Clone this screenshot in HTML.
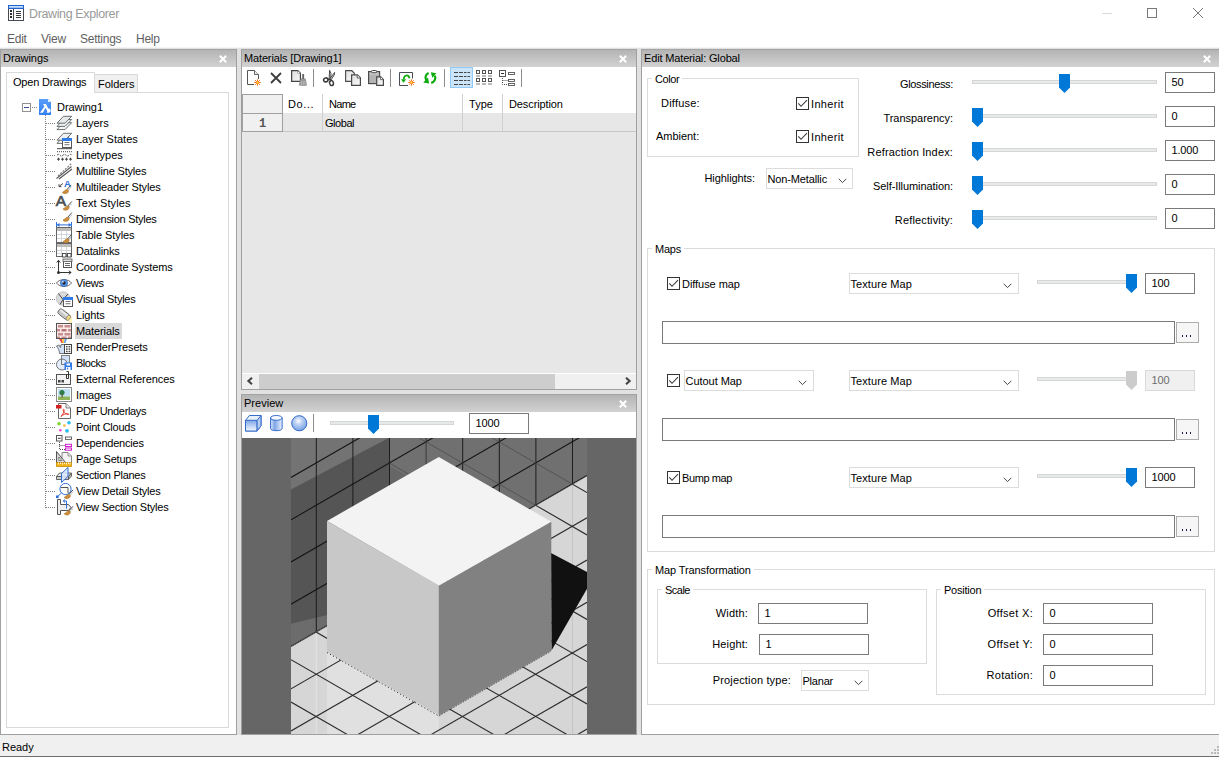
<!DOCTYPE html>
<html><head><meta charset="utf-8"><title>Drawing Explorer</title>
<style>
*{box-sizing:border-box;margin:0;padding:0}
html,body{width:1219px;height:757px;overflow:hidden;background:#fff}
body{position:relative;font-family:"Liberation Sans",sans-serif;font-size:11px;color:#000;letter-spacing:-0.15px}
.a{position:absolute}
.t{position:absolute;white-space:pre;line-height:14px;height:14px}
.hdr{position:absolute;height:18px;background:linear-gradient(#b4b4b4,#d2d2d2);border-top:1px solid #a3a3a3}
.panel{position:absolute;background:#fff;border:1px solid #a0a0a0}
.cx{position:absolute;width:8px;height:8px}
.edit{position:absolute;background:#fff;border:1px solid #7a7a7a;height:21px;line-height:19px;padding-left:5.5px;white-space:pre}
.combo{position:absolute;background:#fff;border:1px solid #dcdcdc;height:21px;line-height:21px;padding-left:0.5px;white-space:pre}
.grp{position:absolute;border:1px solid #dcdcdc}
.grp>span{position:absolute;top:-7px;left:4px;background:#fff;padding:0 3px;line-height:14px;white-space:pre}
.trk{position:absolute;height:4px;background:#e7eaea;border:1px solid #d6d6d6}
.cb{position:absolute;width:13px;height:13px;border:1px solid #333;background:#fff}
.menu{position:absolute;top:31px;font-size:12px;color:#5f5f5f;letter-spacing:-0.25px;line-height:16px;white-space:pre}
</style></head><body>
<svg class="a" style="left:8px;top:5px" width="16" height="16" viewBox="0 0 16 16">
<rect x="0.5" y="3.5" width="15" height="12" fill="#fff" stroke="#454b50"/>
<rect x="0" y="0" width="16" height="4" fill="#2563cc"/><rect x="1" y="1" width="14" height="2" fill="#9cc2f5"/><rect x="1" y="1" width="14" height="1" fill="#c4dbfa"/>
<rect x="5" y="4" width="1" height="11" fill="#454b50"/>
<rect x="2" y="5" width="2" height="2" fill="#2c2c2c"/><rect x="2" y="8" width="2" height="2" fill="#2c2c2c"/><rect x="2" y="11" width="2" height="2" fill="#2c2c2c"/>
<rect x="8" y="6" width="5" height="1" fill="#3a3a3a"/><rect x="8" y="8" width="5" height="1" fill="#3a3a3a"/><rect x="8" y="10" width="5" height="1" fill="#3a3a3a"/><rect x="8" y="12" width="5" height="1" fill="#3a3a3a"/>
</svg>
<div class="t" style="left:29px;top:6px;font-size:12.5px;line-height:17px;height:17px;color:#9a9a9a;letter-spacing:-0.37px">Drawing Explorer</div>
<div class="a" style="left:1102px;top:13px;width:10px;height:1px;background:#d9d9d9"></div>
<div class="a" style="left:1147px;top:8px;width:10px;height:10px;border:1px solid #787878"></div>
<svg class="a" style="left:1192px;top:7px" width="12" height="12" viewBox="0 0 12 12"><path d="M1 1L11 11M11 1L1 11" stroke="#787878" stroke-width="1" fill="none"/></svg>
<div class="menu" style="left:7px">Edit</div><div class="menu" style="left:41px">View</div><div class="menu" style="left:80px">Settings</div><div class="menu" style="left:136px">Help</div><div class="a" style="left:0;top:47px;width:1219px;height:688px;background:#e1e1e1"></div><div class="a" style="left:0;top:47px;width:1219px;height:1px;background:#f4f4f4"></div><div class="a" style="left:0;top:735px;width:1219px;height:22px;background:#f0f0f0"></div><div class="a" style="left:0;top:756px;width:1219px;height:1px;background:#6e6e6e"></div><div class="t" style="left:2px;top:740px;letter-spacing:-0.024px">Ready</div><svg class="a" style="left:1207px;top:744px" width="12" height="10" viewBox="0 0 12 10"><g fill="#b9b9b9"><rect x="10" y="2" width="2" height="2"/><rect x="7" y="5" width="2" height="2"/><rect x="10" y="5" width="2" height="2"/><rect x="4" y="8" width="2" height="2"/><rect x="7" y="8" width="2" height="2"/><rect x="10" y="8" width="2" height="2"/></g></svg><div class="panel" style="left:0px;top:49px;width:237px;height:686px"></div><div class="hdr" style="left:1px;top:49px;width:235px"></div><div class="t" style="left:3px;top:51px;letter-spacing:-0.051px">Drawings</div><svg class="cx" style="left:219px;top:55px" viewBox="0 0 8 8"><path d="M0.8 0.8L7.2 7.2M7.2 0.8L0.8 7.2" stroke="#fff" stroke-width="2" fill="none"/></svg><div class="a" style="left:6px;top:92px;width:223px;height:636px;border:1px solid #d9d9d9;background:#fff"></div><div class="a" style="left:94px;top:74px;width:44px;height:19px;border:1px solid #d9d9d9;background:#f0f0f0"></div><div class="a" style="left:6px;top:72px;width:89px;height:21px;border:1px solid #d9d9d9;border-bottom:none;background:#fff"></div><div class="t" style="left:13px;top:75px;letter-spacing:-0.186px">Open Drawings</div><div class="t" style="left:98px;top:77px;letter-spacing:-0.031px">Folders</div><div class="a" style="left:22px;top:103px;width:9px;height:9px;border:1px solid #919191;background:#fff"></div><div class="a" style="left:24px;top:107px;width:5px;height:1px;background:#3b4f91"></div><div class="a" style="left:32px;top:107px;width:6px;height:1px;background-image:linear-gradient(90deg,#808080 50%,transparent 50%);background-size:2px 1px"></div><svg class="a" style="left:39px;top:99px" width="12" height="16" viewBox="0 0 12 16"><defs><linearGradient id="gd" x1="0" y1="0" x2="0" y2="1"><stop offset="0" stop-color="#5b9cf8"/><stop offset="1" stop-color="#2f80f5"/></linearGradient></defs><path d="M0 0H9L12 3V16H0Z" fill="url(#gd)"/><path d="M9 0V3H12Z" fill="#e6effc"/><path d="M4.1 4.9H7L9.2 9.6C10.6 9.2 11.8 10.1 11.6 11.7C11.5 12.9 10.8 13.7 9.8 13.7H7.6L8.3 12.2L6.6 8.7L3.9 13.7H1L5.4 7.4Z" fill="#fff"/></svg><div class="t" style="left:57px;top:100px;letter-spacing:-0.067px">Drawing1</div><div class="a" style="left:45px;top:115px;width:1px;height:393px;background-image:linear-gradient(#808080 50%,transparent 50%);background-size:1px 2px"></div><div class="a" style="left:46px;top:123px;width:10px;height:1px;background-image:linear-gradient(90deg,#808080 50%,transparent 50%);background-size:2px 1px"></div><svg class="a" style="left:56px;top:115px;overflow:visible" width="16" height="16" viewBox="0 0 16 16"><g stroke="#5c6262" stroke-width="0.9"><path d="M7.4 7.7H15.7L9 14.6H1Z" fill="#f4f6f6"/><path d="M7.4 4.5H15.7L9 11.4H1Z" fill="#eef1f1"/><path d="M7.4 1.3H15.7L9 8.2H1Z" fill="#e6eaea"/></g></svg><div class="t" style="left:76px;top:116px;letter-spacing:-0.066px">Layers</div><div class="a" style="left:46px;top:139px;width:10px;height:1px;background-image:linear-gradient(90deg,#808080 50%,transparent 50%);background-size:2px 1px"></div><svg class="a" style="left:56px;top:131px;overflow:visible" width="16" height="16" viewBox="0 0 16 16"><g stroke="#5c6262" stroke-width="0.9"><path d="M7.4 5.5H13L9 12.4H1Z" fill="#f4f6f6"/><path d="M7.4 2.3H15.7L9 9.2H1Z" fill="#eef1f1"/></g><rect x="6.5" y="7.5" width="9" height="9" fill="#fff" stroke="#555" stroke-width="1"/><rect x="6.0" y="7.0" width="10" height="3" fill="#2f7be8"/><rect x="8.5" y="11.1" width="5" height="0.9" fill="#666"/><rect x="8.5" y="13.3" width="5" height="0.9" fill="#666"/></svg><div class="t" style="left:76px;top:132px;letter-spacing:0.003px">Layer States</div><div class="a" style="left:46px;top:155px;width:10px;height:1px;background-image:linear-gradient(90deg,#808080 50%,transparent 50%);background-size:2px 1px"></div><svg class="a" style="left:56px;top:147px;overflow:visible" width="16" height="16" viewBox="0 0 16 16"><g stroke="#444" fill="none" transform="translate(0,1.2)"><path d="M1 0.5H16" stroke-width="1"/><path d="M1 3.5H16" stroke-width="1" stroke-dasharray="1 1"/><path d="M1 7C2 5.8 3 5.8 4 7S6 8.2 7 7S9 5.8 10 7S12 8.2 13 7S15 5.8 16 7" stroke-width="0.9" stroke-dasharray="2 1"/><path d="M1 11H16" stroke-width="1" stroke-dasharray="3 1"/><path d="M2.5 9.5V12.5M6.5 9.5V12.5M10.5 9.5V12.5M14.5 9.5V12.5" stroke-width="1"/></g></svg><div class="t" style="left:76px;top:148px;letter-spacing:-0.049px">Linetypes</div><div class="a" style="left:46px;top:171px;width:10px;height:1px;background-image:linear-gradient(90deg,#808080 50%,transparent 50%);background-size:2px 1px"></div><svg class="a" style="left:56px;top:163px;overflow:visible" width="16" height="16" viewBox="0 0 16 16"><g stroke="#555" fill="none" stroke-width="1.1"><path d="M0.5 15.5L15.5 3.5"/><path d="M2 13L15.5 0.5" stroke-dasharray="2 1.2" stroke="#777"/><path d="M3 16L16 6"/></g></svg><div class="t" style="left:76px;top:164px;letter-spacing:-0.191px">Multiline Styles</div><div class="a" style="left:46px;top:187px;width:10px;height:1px;background-image:linear-gradient(90deg,#808080 50%,transparent 50%);background-size:2px 1px"></div><svg class="a" style="left:56px;top:179px;overflow:visible" width="16" height="16" viewBox="0 0 16 16"><text x="8" y="8" font-family="Liberation Sans" font-weight="bold" font-size="9.5" fill="#2f6fd6">A</text><path d="M7 4.5L3.5 7" stroke="#333" stroke-width="0.9" fill="none"/><path d="M3 5.2V7.6H5.4" stroke="#333" stroke-width="0.9" fill="none"/><g transform="translate(6.2,10.2) scale(1.0)"><path d="M4.9 0.3L9 -4.3" stroke="#4a4f55" stroke-width="1" fill="none"/><path d="M6 1.2L9.4 -2.6" stroke="#8a8f95" stroke-width="0.8" stroke-dasharray="1.6 0.8" fill="none"/><path d="M0.1 3.2C1 2.6 2.4 1.4 3.6 0.6C4.6 0 5.8 0.2 6.3 1.2C6.6 2.4 5.8 3.8 4.2 4.3C2.6 4.7 0.8 4.2 0.1 3.2Z" fill="#cb8c3c" stroke="#a56f24" stroke-width="0.5"/></g></svg><div class="t" style="left:76px;top:180px;letter-spacing:-0.119px">Multileader Styles</div><div class="a" style="left:46px;top:203px;width:10px;height:1px;background-image:linear-gradient(90deg,#808080 50%,transparent 50%);background-size:2px 1px"></div><svg class="a" style="left:56px;top:195px;overflow:visible" width="16" height="16" viewBox="0 0 16 16"><text x="-0.3" y="11.4" font-family="Liberation Sans" font-size="15.5" fill="#4a5055" stroke="#4a5055" stroke-width="0.7">A</text><g transform="translate(6.8,10.8) scale(1.0)"><path d="M4.9 0.3L9 -4.3" stroke="#4a4f55" stroke-width="1" fill="none"/><path d="M6 1.2L9.4 -2.6" stroke="#8a8f95" stroke-width="0.8" stroke-dasharray="1.6 0.8" fill="none"/><path d="M0.1 3.2C1 2.6 2.4 1.4 3.6 0.6C4.6 0 5.8 0.2 6.3 1.2C6.6 2.4 5.8 3.8 4.2 4.3C2.6 4.7 0.8 4.2 0.1 3.2Z" fill="#cb8c3c" stroke="#a56f24" stroke-width="0.5"/></g></svg><div class="t" style="left:76px;top:196px;letter-spacing:0.141px">Text Styles</div><div class="a" style="left:46px;top:219px;width:10px;height:1px;background-image:linear-gradient(90deg,#808080 50%,transparent 50%);background-size:2px 1px"></div><svg class="a" style="left:56px;top:211px;overflow:visible" width="16" height="16" viewBox="0 0 16 16"><g transform="translate(6.8,6.0) scale(1.0)"><path d="M4.9 0.3L9 -4.3" stroke="#4a4f55" stroke-width="1" fill="none"/><path d="M6 1.2L9.4 -2.6" stroke="#8a8f95" stroke-width="0.8" stroke-dasharray="1.6 0.8" fill="none"/><path d="M0.1 3.2C1 2.6 2.4 1.4 3.6 0.6C4.6 0 5.8 0.2 6.3 1.2C6.6 2.4 5.8 3.8 4.2 4.3C2.6 4.7 0.8 4.2 0.1 3.2Z" fill="#cb8c3c" stroke="#a56f24" stroke-width="0.5"/></g><g stroke="#2f6fd6" fill="none" stroke-width="1"><path d="M0.5 11V16M15.5 11V16"/><path d="M1 13.9H15"/></g><path d="M3.4 11.8L1 13.9L3.4 16ZM12.6 11.8L15 13.9L12.6 16Z" fill="#2f6fd6"/></svg><div class="t" style="left:76px;top:212px;letter-spacing:-0.279px">Dimension Styles</div><div class="a" style="left:46px;top:235px;width:10px;height:1px;background-image:linear-gradient(90deg,#808080 50%,transparent 50%);background-size:2px 1px"></div><svg class="a" style="left:56px;top:227px;overflow:visible" width="16" height="16" viewBox="0 0 16 16"><rect x="0.5" y="0.5" width="15" height="15" fill="#fff" stroke="#666"/><rect x="1" y="1" width="14" height="3" fill="#bdbdbd"/><path d="M1 7.5H15M1 11.5H15M5.5 4V15M10.5 4V15" stroke="#cfd6dc" stroke-width="1" fill="none"/><g transform="translate(6.8,11.5) scale(1.0)"><path d="M4.9 0.3L9 -4.3" stroke="#4a4f55" stroke-width="1" fill="none"/><path d="M6 1.2L9.4 -2.6" stroke="#8a8f95" stroke-width="0.8" stroke-dasharray="1.6 0.8" fill="none"/><path d="M0.1 3.2C1 2.6 2.4 1.4 3.6 0.6C4.6 0 5.8 0.2 6.3 1.2C6.6 2.4 5.8 3.8 4.2 4.3C2.6 4.7 0.8 4.2 0.1 3.2Z" fill="#cb8c3c" stroke="#a56f24" stroke-width="0.5"/></g></svg><div class="t" style="left:76px;top:228px;letter-spacing:-0.065px">Table Styles</div><div class="a" style="left:46px;top:251px;width:10px;height:1px;background-image:linear-gradient(90deg,#808080 50%,transparent 50%);background-size:2px 1px"></div><svg class="a" style="left:56px;top:243px;overflow:visible" width="16" height="16" viewBox="0 0 16 16"><rect x="0.5" y="0.5" width="15" height="13" fill="#fff" stroke="#666"/><rect x="1" y="1" width="14" height="3" fill="#bdbdbd"/><path d="M1 7.5H15M1 10.5H15M5.5 4V13M10.5 4V13" stroke="#cfd6dc" stroke-width="1" fill="none"/><g fill="#fff" stroke="#444" stroke-width="0.9"><rect x="6.5" y="10.5" width="3.5" height="3.5"/><rect x="11.5" y="10.5" width="3.5" height="3.5"/><path d="M10 12.2H11.5" /></g></svg><div class="t" style="left:76px;top:244px;letter-spacing:-0.181px">Datalinks</div><div class="a" style="left:46px;top:267px;width:10px;height:1px;background-image:linear-gradient(90deg,#808080 50%,transparent 50%);background-size:2px 1px"></div><svg class="a" style="left:56px;top:259px;overflow:visible" width="16" height="16" viewBox="0 0 16 16"><g stroke="#333" fill="none" stroke-width="1"><path d="M2.5 13.5V1.5"/><path d="M0.8 3.6L2.5 1.2L4.2 3.6"/><path d="M2.5 13.5H15"/><path d="M12.8 11.8L15.2 13.5L12.8 15.2"/></g><circle cx="2.5" cy="13.5" r="1.5" fill="#333"/><rect x="7.5" y="0.5" width="8" height="8" fill="#fff" stroke="#555"/><rect x="7" y="0" width="9" height="2.5" fill="#ddd" stroke="#555" stroke-width="0.8"/><path d="M9 4.5H14M9 6.5H14" stroke="#666" stroke-width="1"/></svg><div class="t" style="left:76px;top:260px;letter-spacing:-0.138px">Coordinate Systems</div><div class="a" style="left:46px;top:283px;width:10px;height:1px;background-image:linear-gradient(90deg,#808080 50%,transparent 50%);background-size:2px 1px"></div><svg class="a" style="left:56px;top:275px;overflow:visible" width="16" height="16" viewBox="0 0 16 16"><path d="M0.5 8C3.5 3.5 12.5 3.5 15.5 8C12.5 12.5 3.5 12.5 0.5 8Z" fill="#fff" stroke="#666" stroke-width="1"/><circle cx="8" cy="8" r="3.6" fill="#5b9bea" stroke="#2f5fb0" stroke-width="0.7"/><circle cx="8" cy="8" r="1.7" fill="#223"/><circle cx="6.9" cy="6.9" r="0.8" fill="#fff"/></svg><div class="t" style="left:76px;top:276px;letter-spacing:-0.289px">Views</div><div class="a" style="left:46px;top:299px;width:10px;height:1px;background-image:linear-gradient(90deg,#808080 50%,transparent 50%);background-size:2px 1px"></div><svg class="a" style="left:56px;top:291px;overflow:visible" width="16" height="16" viewBox="0 0 16 16"><circle cx="7" cy="7.5" r="6.8" fill="#d9d9d9" stroke="#b0b0b0" stroke-width="0.6"/><path d="M2.5 2.5L7 8.5L12 3" stroke="#444" stroke-width="1" fill="none"/><path d="M7 8.5L4 13.5" stroke="#444" stroke-width="1" fill="none"/><rect x="7.5" y="6.5" width="9" height="9" fill="#fff" stroke="#555" stroke-width="1"/><rect x="7.0" y="6.0" width="10" height="3" fill="#2f7be8"/><rect x="9.5" y="10.1" width="5" height="0.9" fill="#666"/><rect x="9.5" y="12.3" width="5" height="0.9" fill="#666"/></svg><div class="t" style="left:76px;top:292px;letter-spacing:-0.257px">Visual Styles</div><div class="a" style="left:46px;top:315px;width:10px;height:1px;background-image:linear-gradient(90deg,#808080 50%,transparent 50%);background-size:2px 1px"></div><svg class="a" style="left:56px;top:307px;overflow:visible" width="16" height="16" viewBox="0 0 16 16"><path d="M11 10L16 10L16 16L13 16Z" fill="#fdeeb0" opacity="0.85"/><g transform="rotate(38 8 8)"><rect x="1" y="4.5" width="13" height="6" rx="2.5" fill="#c8c8c8" stroke="#666" stroke-width="0.9"/><ellipse cx="13.2" cy="7.5" rx="1.7" ry="3" fill="#f6dc7a" stroke="#777" stroke-width="0.7"/><rect x="2" y="5.5" width="9" height="1.6" fill="#ededed"/></g></svg><div class="t" style="left:76px;top:308px;letter-spacing:-0.132px">Lights</div><div class="a" style="left:46px;top:331px;width:10px;height:1px;background-image:linear-gradient(90deg,#808080 50%,transparent 50%);background-size:2px 1px"></div><div class="a" style="left:75px;top:323px;width:47px;height:16px;background:#d9d9d9"></div><svg class="a" style="left:56px;top:323px;overflow:visible" width="16" height="16" viewBox="0 0 16 16"><rect x="0.5" y="0.5" width="15" height="15" fill="#fbeaea" stroke="#555"/><g fill="#c98f8f"><rect x="2" y="2" width="5" height="2.5"/><rect x="8.5" y="2" width="6" height="2.5"/><rect x="1" y="6" width="3" height="2.5"/><rect x="5.5" y="6" width="5" height="2.5" fill="#b57878"/><rect x="12" y="6" width="3" height="2.5"/><rect x="2" y="10" width="5" height="2.5"/><rect x="8.5" y="10" width="6" height="2.5"/><rect x="1" y="13.5" width="3" height="1.5"/><rect x="5.5" y="13.5" width="5" height="1.5"/><rect x="12" y="13.5" width="3" height="1.5"/></g></svg><div class="t" style="left:76px;top:324px;letter-spacing:-0.103px">Materials</div><div class="a" style="left:46px;top:347px;width:10px;height:1px;background-image:linear-gradient(90deg,#808080 50%,transparent 50%);background-size:2px 1px"></div><svg class="a" style="left:56px;top:339px;overflow:visible" width="16" height="16" viewBox="0 0 16 16"><path d="M3 0L6 0L7 4L5.5 4Z" fill="#f04848"/><path d="M6 0L8.5 0L8 4L7 4Z" fill="#f7d038"/><path d="M8.5 0L11 0L9.5 4L8 4Z" fill="#6aa0f0"/><path d="M0.5 7L3 6L4.5 8.5L5 5.5H10V14.5H3.5C3.5 11 2 9.5 0.5 7Z" fill="#cfe0f7" stroke="#666" stroke-width="0.9"/><rect x="8.5" y="5.5" width="7" height="9" fill="#fff" stroke="#444" stroke-width="1"/><g fill="#444"><rect x="10" y="7" width="1.6" height="1.4"/><rect x="12.6" y="7" width="1.6" height="1.4"/><rect x="10" y="9.4" width="1.6" height="1.4"/><rect x="12.6" y="9.4" width="1.6" height="1.4"/><rect x="10" y="11.8" width="1.6" height="1.4"/><rect x="12.6" y="11.8" width="1.6" height="1.4"/></g></svg><div class="t" style="left:76px;top:340px;letter-spacing:-0.131px">RenderPresets</div><div class="a" style="left:46px;top:363px;width:10px;height:1px;background-image:linear-gradient(90deg,#808080 50%,transparent 50%);background-size:2px 1px"></div><svg class="a" style="left:56px;top:355px;overflow:visible" width="16" height="16" viewBox="0 0 16 16"><rect x="5.5" y="0.5" width="8" height="9" fill="#cfe0f7" stroke="#777" stroke-width="0.9"/><circle cx="6" cy="9.5" r="5.5" fill="#e2ecfa" stroke="#666" stroke-width="0.9"/><path d="M5.5 4V9.5H11" fill="none" stroke="#666" stroke-width="0.9"/><rect x="8.5" y="7.5" width="7.5" height="7.5" fill="#2f7be8"/><rect x="10.5" y="8.5" width="3.5" height="2" fill="#fff"/><rect x="10" y="12" width="4.5" height="3" fill="#fff"/><rect x="11" y="12.6" width="1.2" height="1.8" fill="#2f7be8"/></svg><div class="t" style="left:76px;top:356px;letter-spacing:-0.481px">Blocks</div><div class="a" style="left:46px;top:379px;width:10px;height:1px;background-image:linear-gradient(90deg,#808080 50%,transparent 50%);background-size:2px 1px"></div><svg class="a" style="left:56px;top:371px;overflow:visible" width="16" height="16" viewBox="0 0 16 16"><rect x="0.5" y="3.5" width="14" height="10" fill="#f2f2f2" stroke="#555" stroke-width="1"/><rect x="2" y="9" width="2.5" height="2.5" fill="#444"/><rect x="5.5" y="9" width="2.5" height="2.5" fill="#444"/><path d="M10.5 0.5H12.5V7.5H10.5V3" fill="none" stroke="#333" stroke-width="1"/></svg><div class="t" style="left:76px;top:372px;letter-spacing:-0.048px">External References</div><div class="a" style="left:46px;top:395px;width:10px;height:1px;background-image:linear-gradient(90deg,#808080 50%,transparent 50%);background-size:2px 1px"></div><svg class="a" style="left:56px;top:387px;overflow:visible" width="16" height="16" viewBox="0 0 16 16"><rect x="0.5" y="0.5" width="15" height="14" fill="#fff" stroke="#888" stroke-width="1"/><rect x="2" y="2" width="12" height="7.5" fill="#bfe0f5"/><rect x="2" y="9.5" width="12" height="3.5" fill="#8fb35a"/><circle cx="6" cy="5.5" r="2.6" fill="#2e7d46"/><rect x="5.5" y="7.5" width="1.2" height="3" fill="#6b4a2a"/></svg><div class="t" style="left:76px;top:388px;letter-spacing:-0.136px">Images</div><div class="a" style="left:46px;top:411px;width:10px;height:1px;background-image:linear-gradient(90deg,#808080 50%,transparent 50%);background-size:2px 1px"></div><svg class="a" style="left:56px;top:403px;overflow:visible" width="16" height="16" viewBox="0 0 16 16"><path d="M2.5 0.5H10L14.5 5V15.5H2.5Z" fill="#fff" stroke="#666" stroke-width="1"/><path d="M10 0.5V5H14.5" fill="#e8e8e8" stroke="#666" stroke-width="0.8"/><rect x="0" y="2" width="5.5" height="3.5" fill="#d42020"/><path d="M5 13.5C7 11 8.5 8.5 8 6.5C7.5 5.6 6.8 6.6 7.4 8C8.4 10 10.5 11.6 12.6 11.4C13.2 10.6 11 10.4 9 11C7.4 11.5 6 12.4 5 13.5Z" fill="none" stroke="#e03a2a" stroke-width="1"/></svg><div class="t" style="left:76px;top:404px;letter-spacing:-0.340px">PDF Underlays</div><div class="a" style="left:46px;top:427px;width:10px;height:1px;background-image:linear-gradient(90deg,#808080 50%,transparent 50%);background-size:2px 1px"></div><svg class="a" style="left:56px;top:419px;overflow:visible" width="16" height="16" viewBox="0 0 16 16"><circle cx="3" cy="4.7" r="1.8" fill="#7fd630"/><circle cx="13" cy="3.8" r="1.8" fill="#28c0f0"/><circle cx="8.4" cy="6.5" r="1.3" fill="#f0b830"/><circle cx="4.3" cy="11.2" r="1.3" fill="#f040d0"/><circle cx="11" cy="11.8" r="1.9" fill="#28c0f0"/></svg><div class="t" style="left:76px;top:420px;letter-spacing:-0.243px">Point Clouds</div><div class="a" style="left:46px;top:443px;width:10px;height:1px;background-image:linear-gradient(90deg,#808080 50%,transparent 50%);background-size:2px 1px"></div><svg class="a" style="left:56px;top:435px;overflow:visible" width="16" height="16" viewBox="0 0 16 16"><rect x="0.5" y="0.5" width="5.5" height="5.5" fill="#fff" stroke="#555" stroke-width="1"/><rect x="2" y="2.8" width="2.6" height="1" fill="#333"/><rect x="9.5" y="2" width="6" height="2.4" fill="#fff" stroke="#555" stroke-width="0.9"/><path d="M3.5 7V14.5H9M3.5 10.5H9" fill="none" stroke="#555" stroke-width="1" stroke-dasharray="1 1"/><rect x="9.5" y="9.3" width="6" height="2.2" fill="#fff" stroke="#d020d0" stroke-width="1"/><rect x="9.5" y="13" width="6" height="2.2" fill="#fff" stroke="#d020d0" stroke-width="1"/></svg><div class="t" style="left:76px;top:436px;letter-spacing:-0.222px">Dependencies</div><div class="a" style="left:46px;top:459px;width:10px;height:1px;background-image:linear-gradient(90deg,#808080 50%,transparent 50%);background-size:2px 1px"></div><svg class="a" style="left:56px;top:451px;overflow:visible" width="16" height="16" viewBox="0 0 16 16"><path d="M6 1.5H12L15.5 5V12H6Z" fill="#f4f4f4" stroke="#777" stroke-width="0.9"/><path d="M12 1.5V5H15.5" fill="#ddd" stroke="#777" stroke-width="0.7"/><path d="M0.5 0.5V11.5H9.5Z" fill="#d9d9d9" stroke="#555" stroke-width="1"/><path d="M2.8 6V9.5H5.8Z" fill="#fff" stroke="#555" stroke-width="0.7"/><rect x="0.5" y="11.5" width="15" height="4" fill="#f2b418" stroke="#c48a00" stroke-width="0.8"/><path d="M2.5 11.5V13.5M4.5 11.5V13M6.5 11.5V13.5M8.5 11.5V13M10.5 11.5V13.5M12.5 11.5V13M14 11.5V13.5" stroke="#fff" stroke-width="0.8"/></svg><div class="t" style="left:76px;top:452px;letter-spacing:-0.230px">Page Setups</div><div class="a" style="left:46px;top:475px;width:10px;height:1px;background-image:linear-gradient(90deg,#808080 50%,transparent 50%);background-size:2px 1px"></div><svg class="a" style="left:56px;top:467px;overflow:visible" width="16" height="16" viewBox="0 0 16 16"><path d="M0.5 9.5L3.5 6H15.5L12.5 9.5Z" fill="#e6e6e6" stroke="#555" stroke-width="0.9"/><path d="M0.5 9.5H12.5V12.5H0.5Z" fill="#d0d0d0" stroke="#555" stroke-width="0.9"/><path d="M12.5 9.5L15.5 6V9L12.5 12.5Z" fill="#bbb" stroke="#555" stroke-width="0.9"/><path d="M5.5 6.5L12 0.5V9.5L5.5 15.5Z" fill="#dbe8fb" fill-opacity="0.85" stroke="#2f6fd6" stroke-width="1"/></svg><div class="t" style="left:76px;top:468px;letter-spacing:-0.284px">Section Planes</div><div class="a" style="left:46px;top:491px;width:10px;height:1px;background-image:linear-gradient(90deg,#808080 50%,transparent 50%);background-size:2px 1px"></div><svg class="a" style="left:56px;top:483px;overflow:visible" width="16" height="16" viewBox="0 0 16 16"><circle cx="9.5" cy="6" r="5.6" fill="#fff" stroke="#2f6fd6" stroke-width="1"/><path d="M5 4.5H12V10" fill="none" stroke="#555" stroke-width="1"/><path d="M5.5 10L1.5 13.5" stroke="#2f6fd6" stroke-width="1"/><rect x="0" y="12.5" width="2.6" height="2.6" fill="#2f6fd6"/><g transform="translate(8,11.2) scale(1.0)"><path d="M4.9 0.3L9 -4.3" stroke="#4a4f55" stroke-width="1" fill="none"/><path d="M6 1.2L9.4 -2.6" stroke="#8a8f95" stroke-width="0.8" stroke-dasharray="1.6 0.8" fill="none"/><path d="M0.1 3.2C1 2.6 2.4 1.4 3.6 0.6C4.6 0 5.8 0.2 6.3 1.2C6.6 2.4 5.8 3.8 4.2 4.3C2.6 4.7 0.8 4.2 0.1 3.2Z" fill="#cb8c3c" stroke="#a56f24" stroke-width="0.5"/></g></svg><div class="t" style="left:76px;top:484px;letter-spacing:-0.179px">View Detail Styles</div><div class="a" style="left:46px;top:507px;width:10px;height:1px;background-image:linear-gradient(90deg,#808080 50%,transparent 50%);background-size:2px 1px"></div><svg class="a" style="left:56px;top:499px;overflow:visible" width="16" height="16" viewBox="0 0 16 16"><path d="M1.5 0.5H4.5V5.5H12.5L15 8.5L12.5 11.5H4.5V15.5H1.5Z" fill="#efefef" stroke="#555" stroke-width="1"/><path d="M10.5 9.5V2H7.5" fill="none" stroke="#2f6fd6" stroke-width="1"/><path d="M9 0.6L7.2 2L9 3.4" fill="none" stroke="#2f6fd6" stroke-width="1"/><g transform="translate(8,11.6) scale(1.0)"><path d="M4.9 0.3L9 -4.3" stroke="#4a4f55" stroke-width="1" fill="none"/><path d="M6 1.2L9.4 -2.6" stroke="#8a8f95" stroke-width="0.8" stroke-dasharray="1.6 0.8" fill="none"/><path d="M0.1 3.2C1 2.6 2.4 1.4 3.6 0.6C4.6 0 5.8 0.2 6.3 1.2C6.6 2.4 5.8 3.8 4.2 4.3C2.6 4.7 0.8 4.2 0.1 3.2Z" fill="#cb8c3c" stroke="#a56f24" stroke-width="0.5"/></g></svg><div class="t" style="left:76px;top:500px;letter-spacing:-0.206px">View Section Styles</div><div class="panel" style="left:241px;top:49px;width:396px;height:341px"></div><div class="hdr" style="left:242px;top:49px;width:394px"></div><div class="t" style="left:244px;top:51px;letter-spacing:-0.146px">Materials [Drawing1]</div><svg class="cx" style="left:619px;top:55px" viewBox="0 0 8 8"><path d="M0.8 0.8L7.2 7.2M7.2 0.8L0.8 7.2" stroke="#fff" stroke-width="2" fill="none"/></svg><svg class="a" style="left:246px;top:70px;overflow:visible" width="16" height="16" viewBox="0 0 16 16"><path d="M1.5 0.5H8.5L12.5 4.5V14.5H1.5Z" fill="#fff" stroke="#555" stroke-width="1"/><path d="M8.5 0.5V4.5H12.5" fill="#eee" stroke="#555" stroke-width="0.9"/><rect x="8" y="9" width="8" height="7" fill="#fff"/><g transform="translate(11.5,12.5)"><path d="M0 -3.2V3.2M-3.2 0H3.2M-2.3 -2.3L2.3 2.3M2.3 -2.3L-2.3 2.3" stroke="#f26a1b" stroke-width="1" fill="none"/><circle r="1.2" fill="#ffd23a"/></g></svg><svg class="a" style="left:270px;top:72px;overflow:visible" width="12" height="12" viewBox="0 0 12 12"><path d="M1 1L11 11M11 1L1 11" stroke="#3c3c3c" stroke-width="1.8" fill="none"/></svg><svg class="a" style="left:291px;top:70px;overflow:visible" width="16" height="16" viewBox="0 0 16 16"><defs><linearGradient id="gp" x1="0" y1="0" x2="1" y2="1"><stop offset="0" stop-color="#dcdcdc"/><stop offset="1" stop-color="#fafafa"/></linearGradient></defs><path d="M0.6 0.6H6.8L9.4 3.2V11.4H0.6Z" fill="url(#gp)" stroke="#444" stroke-width="1.2"/><path d="M6.6 0.8V3.4H9.2" fill="#fff" stroke="#888" stroke-width="0.6"/><rect x="11.2" y="4" width="1.9" height="5" fill="#666"/><rect x="9.6" y="8.6" width="5.2" height="1.2" fill="#777"/><path d="M9.4 9.8H15L16 15.4C13 16.2 10.5 16.2 7.6 15.2Z" fill="#9a9a9a"/><path d="M10.6 11V15M12.3 11V15.3M14 11V15" stroke="#c8c8c8" stroke-width="0.6"/></svg><div class="a" style="left:313px;top:69px;width:1px;height:18px;background:#8c8c8c"></div><svg class="a" style="left:323px;top:70px;overflow:visible" width="12" height="16" viewBox="0 0 12 16"><path d="M6.6 0.3L8 3.6L7.5 9.6L6.1 9.2Z" fill="#ddd" stroke="#3a3a3a" stroke-width="0.9"/><path d="M11.6 2.4L11.2 5L7.8 10.2L6.6 9.2Z" fill="#ddd" stroke="#3a3a3a" stroke-width="0.9"/><ellipse cx="2.8" cy="9.9" rx="2.2" ry="1.9" transform="rotate(-20 2.8 9.9)" fill="none" stroke="#3a3a3a" stroke-width="1.5"/><ellipse cx="8.5" cy="13" rx="1.9" ry="2.6" transform="rotate(-12 8.5 13)" fill="none" stroke="#3a3a3a" stroke-width="1.5"/><path d="M4.6 9.2L7 9.4L7.9 10.6" fill="none" stroke="#3a3a3a" stroke-width="1.4"/></svg><svg class="a" style="left:345px;top:70px;overflow:visible" width="16" height="16" viewBox="0 0 16 16"><defs><linearGradient id="gcp" x1="0" y1="0" x2="1" y2="1"><stop offset="0" stop-color="#dedede"/><stop offset="1" stop-color="#fbfbfb"/></linearGradient></defs><path d="M0.6 0.6H6.8L9.4 3.2V11.4H0.6Z" fill="url(#gcp)" stroke="#4a4a4a" stroke-width="1.1"/><path d="M6.6 0.8L9.2 3.4" fill="none" stroke="#4a4a4a" stroke-width="0.9"/><path d="M6.6 4.8H12.4L15.4 7.8V15.4H6.6Z" fill="url(#gcp)" stroke="#4a4a4a" stroke-width="1.2"/><path d="M12.2 5V8H15.2" fill="#fff" stroke="#4a4a4a" stroke-width="0.9"/></svg><svg class="a" style="left:368px;top:70px;overflow:visible" width="16" height="16" viewBox="0 0 16 16"><rect x="0.6" y="1.6" width="11" height="12" fill="#b4b4b4" stroke="#4a4a4a" stroke-width="1.2"/><rect x="1.6" y="2.6" width="9" height="2" fill="#c8c8c8"/><rect x="3.4" y="0.5" width="5.4" height="2.2" rx="1" fill="#f4f4f4" stroke="#4a4a4a" stroke-width="1"/><path d="M8.7 6.8H12.8L15.4 9.4V15.4H8.7Z" fill="url(#gcp)" stroke="#4a4a4a" stroke-width="1.2"/><path d="M12.6 7V9.6H15.2" fill="#fff" stroke="#4a4a4a" stroke-width="0.8"/></svg><div class="a" style="left:390px;top:69px;width:1px;height:18px;background:#8c8c8c"></div><svg class="a" style="left:399px;top:72px;overflow:visible" width="16" height="14" viewBox="0 0 16 14"><path d="M13.5 6.5V0.5H0.5V13.5H9" fill="none" stroke="#474d54" stroke-width="1"/><path d="M10.4 6.4C10 2.4 5 2.4 4.8 7" fill="none" stroke="#0cab0c" stroke-width="1.7"/><path d="M2 7.2H7.2L4.5 10.8Z" fill="#0cab0c"/><g transform="translate(12.4,10.5)"><path d="M0 -3.2V3.2M-3.2 0H3.2M-2.3 -2.3L2.3 2.3M2.3 -2.3L-2.3 2.3" stroke="#f26a1b" stroke-width="1" fill="none"/><circle r="1.2" fill="#ffd23a"/></g></svg><svg class="a" style="left:423px;top:72px;overflow:visible" width="14" height="12" viewBox="0 0 14 12"><path d="M5.6 1C2.6 2.2 1.8 5.4 3.2 8.2" fill="none" stroke="#0cab0c" stroke-width="2.2"/><path d="M0.2 10.6L6.1 11.4L5 5.6Z" fill="#0cab0c"/><path d="M11.8 3.6C13.2 6.6 11.6 10 8.2 10.9" fill="none" stroke="#0cab0c" stroke-width="2.2"/><path d="M7.8 0.3L13.4 1.3L9.4 5.8Z" fill="#0cab0c"/></svg><div class="a" style="left:444px;top:69px;width:1px;height:18px;background:#8c8c8c"></div><div class="a" style="left:450px;top:67px;width:23px;height:21px;background:#cce4f7;border:1px solid #91c9f7"></div><svg class="a" style="left:454px;top:71px;overflow:visible" width="16" height="14" viewBox="0 0 16 14"><rect x="0" y="1" width="4" height="1" fill="#444"/><rect x="5" y="1" width="4" height="1" fill="#444"/><rect x="10" y="1" width="2.5" height="1" fill="#444"/><rect x="13.5" y="1" width="2.5" height="1" fill="#444"/><rect x="0" y="5" width="4" height="1" fill="#444"/><rect x="5" y="5" width="4" height="1" fill="#444"/><rect x="10" y="5" width="2.5" height="1" fill="#444"/><rect x="13.5" y="5" width="2.5" height="1" fill="#444"/><rect x="0" y="9" width="4" height="1" fill="#444"/><rect x="5" y="9" width="4" height="1" fill="#444"/><rect x="10" y="9" width="2.5" height="1" fill="#444"/><rect x="13.5" y="9" width="2.5" height="1" fill="#444"/><rect x="0" y="13" width="4" height="1" fill="#444"/><rect x="5" y="13" width="4" height="1" fill="#444"/><rect x="10" y="13" width="2.5" height="1" fill="#444"/><rect x="13.5" y="13" width="2.5" height="1" fill="#444"/></svg><svg class="a" style="left:476px;top:70px;overflow:visible" width="16" height="16" viewBox="0 0 16 16"><rect x="0.5" y="0.5" width="3" height="3" fill="#fff" stroke="#555" stroke-width="1"/><rect x="0" y="5.5" width="4" height="1" fill="#777"/><rect x="6.5" y="0.5" width="3" height="3" fill="#fff" stroke="#555" stroke-width="1"/><rect x="6" y="5.5" width="4" height="1" fill="#777"/><rect x="12.5" y="0.5" width="3" height="3" fill="#fff" stroke="#555" stroke-width="1"/><rect x="12" y="5.5" width="4" height="1" fill="#777"/><rect x="0.5" y="8.5" width="3" height="3" fill="#fff" stroke="#555" stroke-width="1"/><rect x="0" y="13.5" width="4" height="1" fill="#777"/><rect x="6.5" y="8.5" width="3" height="3" fill="#fff" stroke="#555" stroke-width="1"/><rect x="6" y="13.5" width="4" height="1" fill="#777"/><rect x="12.5" y="8.5" width="3" height="3" fill="#fff" stroke="#555" stroke-width="1"/><rect x="12" y="13.5" width="4" height="1" fill="#777"/></svg><svg class="a" style="left:499px;top:70px;overflow:visible" width="16" height="16" viewBox="0 0 16 16"><rect x="0.5" y="0.5" width="6" height="6" fill="#fff" stroke="#555" stroke-width="1"/><rect x="2" y="3" width="3" height="1" fill="#333"/><rect x="9.5" y="2.5" width="6" height="2" fill="#fff" stroke="#555" stroke-width="0.9"/><path d="M3.5 8V14.5H9M3.5 10.5H9" fill="none" stroke="#555" stroke-width="1" stroke-dasharray="1 1"/><rect x="9.5" y="9.5" width="6" height="2" fill="#fff" stroke="#555" stroke-width="0.9"/><rect x="9.5" y="13.5" width="6" height="2" fill="#fff" stroke="#555" stroke-width="0.9"/></svg><div class="a" style="left:521px;top:69px;width:1px;height:18px;background:#8c8c8c"></div><div class="a" style="left:242px;top:94px;width:394px;height:280px;background:#e7e7e7"></div><div class="a" style="left:283px;top:94px;width:353px;height:19px;background:#fff"></div><div class="a" style="left:242px;top:94px;width:41px;height:20px;background:#f0f0f0;border:1px solid #a0a0a0"></div><div class="a" style="left:242px;top:113px;width:41px;height:19px;background:#f0f0f0;border:1px solid #a0a0a0"></div><div class="t" style="left:259px;top:117px;font-weight:bold;color:#555;letter-spacing:0;font-family:'Liberation Mono',monospace;font-size:12px">1</div><div class="a" style="left:322px;top:94px;width:1px;height:37px;background:#d0d0d0"></div><div class="a" style="left:462px;top:94px;width:1px;height:37px;background:#d0d0d0"></div><div class="a" style="left:502px;top:94px;width:1px;height:37px;background:#d0d0d0"></div><div class="a" style="left:283px;top:131px;width:353px;height:1px;background:#c8c8c8"></div><div class="t" style="left:288px;top:97px;letter-spacing:0.566px">Do...</div><div class="t" style="left:329px;top:97px;letter-spacing:-0.715px">Name</div><div class="t" style="left:469px;top:97px;letter-spacing:0.047px">Type</div><div class="t" style="left:509px;top:97px;letter-spacing:-0.103px">Description</div><div class="t" style="left:325px;top:116px;letter-spacing:-0.459px">Global</div><div class="a" style="left:242px;top:373px;width:394px;height:1px;background:#fff"></div><div class="a" style="left:242px;top:374px;width:394px;height:15px;background:#f0f0f0"></div><div class="a" style="left:259px;top:374px;width:296px;height:15px;background:#cdcdcd"></div><svg class="a" style="left:246px;top:376px;overflow:visible" width="8" height="10" viewBox="0 0 8 10"><path d="M6 1.8L2.4 5L6 8.2" fill="none" stroke="#444" stroke-width="2.1"/></svg><svg class="a" style="left:624px;top:376px;overflow:visible" width="8" height="10" viewBox="0 0 8 10"><path d="M2 1.8L5.6 5L2 8.2" fill="none" stroke="#444" stroke-width="2.1"/></svg><div class="panel" style="left:241px;top:394px;width:396px;height:341px"></div><div class="hdr" style="left:242px;top:394px;width:394px"></div><div class="t" style="left:244px;top:396px;letter-spacing:0.029px">Preview</div><svg class="cx" style="left:619px;top:400px" viewBox="0 0 8 8"><path d="M0.8 0.8L7.2 7.2M7.2 0.8L0.8 7.2" stroke="#fff" stroke-width="2" fill="none"/></svg><svg class="a" style="left:244.8px;top:414.8px;overflow:visible" width="16.5" height="16.5" viewBox="0 0 17 17"><defs><linearGradient id="gb" x1="0" y1="0" x2="0" y2="1"><stop offset="0" stop-color="#7ea6e6"/><stop offset="1" stop-color="#f4f8ff"/></linearGradient></defs><path d="M0.5 5.5L4.5 0.5H16.5V11L12.5 16.5H0.5Z" fill="#e6eefb" stroke="#2f66c8" stroke-width="1"/><path d="M0.5 5.5H12.5V16.5H0.5Z" fill="url(#gb)" stroke="#2f66c8" stroke-width="1"/><path d="M12.5 5.5L16.5 0.5V11L12.5 16.5Z" fill="#b9cff2" stroke="#2f66c8" stroke-width="1"/></svg><svg class="a" style="left:269.5px;top:414.8px;overflow:visible" width="12.7" height="16.4" viewBox="0 0 13 17"><defs><linearGradient id="gc" x1="0" y1="0" x2="1" y2="0"><stop offset="0" stop-color="#dfe9fa"/><stop offset="0.35" stop-color="#7ea6e6"/><stop offset="1" stop-color="#eef4ff"/></linearGradient></defs><path d="M0.5 3V14C0.5 17 12.5 17 12.5 14V3Z" fill="url(#gc)" stroke="#2f66c8" stroke-width="1"/><ellipse cx="6.5" cy="3" rx="6" ry="2.5" fill="#f4f8ff" stroke="#2f66c8" stroke-width="1"/></svg><svg class="a" style="left:290.8px;top:414.8px;overflow:visible" width="16.5" height="16.5" viewBox="0 0 17 17"><defs><radialGradient id="gs" cx="0.45" cy="0.35" r="0.6"><stop offset="0" stop-color="#ffffff"/><stop offset="0.35" stop-color="#c4d7f5"/><stop offset="1" stop-color="#7ea6e6"/></radialGradient></defs><circle cx="8.5" cy="8.5" r="7.8" fill="url(#gs)" stroke="#2f66c8" stroke-width="1"/></svg><div class="a" style="left:313px;top:414px;width:1px;height:18px;background:#8c8c8c"></div><div class="trk" style="left:330px;top:421px;width:124px"></div><svg class="a" style="left:368px;top:415px" width="11" height="19" viewBox="0 0 11 19"><path d="M0 0H11V13.5L5.5 19L0 13.5Z" fill="#0078d7"/></svg><div class="edit" style="left:469px;top:413px;width:60px">1000</div><svg class="a" style="left:242px;top:438px" width="394" height="296" viewBox="0 0 394 296"><rect x="0" y="0" width="394" height="296" fill="#666"/><defs><clipPath id="sc"><rect x="49" y="0" width="296" height="296"/></clipPath><clipPath id="wall"><path d="M49 0H345V38.0L49 208.5Z"/></clipPath><clipPath id="floor"><path d="M49 296H345V38.0L49 208.5Z"/></clipPath></defs><g clip-path="url(#sc)"><g clip-path="url(#wall)"><rect x="49" y="0" width="98.5" height="296" fill="#555"/><rect x="147.5" y="0" width="200" height="296" fill="#707070"/><path d="M49.0,0.0 L49.0,51.5 L147.5,-0.5 Z" fill="#737373"/><path d="M49.0,185.7 L147.5,162.0 L147.5,262.0 L49.0,262.0 Z" fill="#6c6c6c"/><path d="M147.5,28.0 L178.0,45.0 L147.5,62.0 Z" fill="#666"/><path d="M74.3,0.0 L74.3,296.0" stroke="#1c1c1c" stroke-width="1" fill="none"/><path d="M110.9,0.0 L110.9,296.0" stroke="#1c1c1c" stroke-width="1" fill="none"/><path d="M147.5,0.0 L147.5,296.0" stroke="#1c1c1c" stroke-width="1" fill="none"/><path d="M184.1,0.0 L184.1,296.0" stroke="#3a3a3a" stroke-width="1" fill="none"/><path d="M220.7,0.0 L220.7,296.0" stroke="#1c1c1c" stroke-width="1" fill="none"/><path d="M257.3,0.0 L257.3,296.0" stroke="#1c1c1c" stroke-width="1" fill="none"/><path d="M293.9,0.0 L293.9,296.0" stroke="#1c1c1c" stroke-width="1" fill="none"/><path d="M330.5,0.0 L330.5,296.0" stroke="#1c1c1c" stroke-width="1" fill="none"/><path d="M49.0,-171.8 L345.0,-342.7" stroke="#151515" stroke-width="1.1" fill="none"/><path d="M49.0,-129.5 L345.0,-300.4" stroke="#151515" stroke-width="1.1" fill="none"/><path d="M49.0,-87.2 L345.0,-258.2" stroke="#151515" stroke-width="1.1" fill="none"/><path d="M49.0,-45.0 L345.0,-215.9" stroke="#151515" stroke-width="1.1" fill="none"/><path d="M49.0,-2.8 L345.0,-173.7" stroke="#151515" stroke-width="1.1" fill="none"/><path d="M49.0,39.5 L345.0,-131.4" stroke="#151515" stroke-width="1.1" fill="none"/><path d="M49.0,81.8 L345.0,-89.2" stroke="#151515" stroke-width="1.1" fill="none"/><path d="M49.0,124.0 L345.0,-46.9" stroke="#151515" stroke-width="1.1" fill="none"/><path d="M49.0,166.2 L345.0,-4.7" stroke="#151515" stroke-width="1.1" fill="none"/><path d="M49.0,208.5 L345.0,37.6" stroke="#151515" stroke-width="1.1" fill="none"/><path d="M49.0,250.8 L345.0,79.8" stroke="#151515" stroke-width="1.1" fill="none"/><path d="M49.0,293.0 L345.0,122.1" stroke="#151515" stroke-width="1.1" fill="none"/><path d="M49.0,335.2 L345.0,164.3" stroke="#151515" stroke-width="1.1" fill="none"/><path d="M147.5,-59.4 L345.0,54.6" stroke="#4c4c4c" stroke-width="0.8" fill="none"/><path d="M147.5,-17.2 L345.0,96.9" stroke="#4c4c4c" stroke-width="0.8" fill="none"/><path d="M147.5,25.1 L345.0,139.1" stroke="#4c4c4c" stroke-width="0.8" fill="none"/><path d="M147.5,67.3 L345.0,181.4" stroke="#4c4c4c" stroke-width="0.8" fill="none"/><path d="M147.5,109.6 L345.0,223.6" stroke="#4c4c4c" stroke-width="0.8" fill="none"/><path d="M147.5,151.8 L345.0,265.9" stroke="#4c4c4c" stroke-width="0.8" fill="none"/><path d="M147.5,194.1 L345.0,308.1" stroke="#4c4c4c" stroke-width="0.8" fill="none"/><path d="M147.5,236.3 L345.0,350.4" stroke="#4c4c4c" stroke-width="0.8" fill="none"/><path d="M147.5,278.6 L345.0,392.6" stroke="#4c4c4c" stroke-width="0.8" fill="none"/><path d="M147.5,320.8 L345.0,434.9" stroke="#4c4c4c" stroke-width="0.8" fill="none"/><path d="M147.5,363.1 L345.0,477.1" stroke="#4c4c4c" stroke-width="0.8" fill="none"/><path d="M147.5,405.3 L345.0,519.4" stroke="#4c4c4c" stroke-width="0.8" fill="none"/><path d="M147.5,447.6 L345.0,561.6" stroke="#4c4c4c" stroke-width="0.8" fill="none"/><path d="M147.5,489.8 L345.0,603.9" stroke="#4c4c4c" stroke-width="0.8" fill="none"/></g><g clip-path="url(#floor)"><rect x="49" y="0" width="296" height="296" fill="#d6d6d6"/><rect x="85" y="0" width="111.8" height="296" fill="#e0e0e0"/><path d="M74.3,0.0 L74.3,296.0" stroke="#e4e4e4" stroke-width="1" fill="none"/><path d="M330.5,0.0 L330.5,296.0" stroke="#c4c4c4" stroke-width="1" fill="none"/><path d="M49.0,-87.2 L345.0,-258.2" stroke="#2a2a2a" stroke-width="1.1" fill="none"/><path d="M49.0,-45.0 L345.0,-215.9" stroke="#2a2a2a" stroke-width="1.1" fill="none"/><path d="M49.0,-2.8 L345.0,-173.7" stroke="#2a2a2a" stroke-width="1.1" fill="none"/><path d="M49.0,39.5 L345.0,-131.4" stroke="#2a2a2a" stroke-width="1.1" fill="none"/><path d="M49.0,81.8 L345.0,-89.2" stroke="#2a2a2a" stroke-width="1.1" fill="none"/><path d="M49.0,124.0 L345.0,-46.9" stroke="#2a2a2a" stroke-width="1.1" fill="none"/><path d="M49.0,166.2 L345.0,-4.7" stroke="#2a2a2a" stroke-width="1.1" fill="none"/><path d="M49.0,208.5 L345.0,37.6" stroke="#2a2a2a" stroke-width="1.1" fill="none"/><path d="M49.0,250.8 L345.0,79.8" stroke="#2a2a2a" stroke-width="1.1" fill="none"/><path d="M49.0,293.0 L345.0,122.1" stroke="#2a2a2a" stroke-width="1.1" fill="none"/><path d="M49.0,335.2 L345.0,164.3" stroke="#2a2a2a" stroke-width="1.1" fill="none"/><path d="M49.0,377.5 L345.0,206.6" stroke="#2a2a2a" stroke-width="1.1" fill="none"/><path d="M49.0,419.8 L345.0,248.8" stroke="#2a2a2a" stroke-width="1.1" fill="none"/><path d="M49.0,462.0 L345.0,291.1" stroke="#2a2a2a" stroke-width="1.1" fill="none"/><path d="M49.0,504.2 L345.0,333.3" stroke="#2a2a2a" stroke-width="1.1" fill="none"/><path d="M49.0,-116.3 L345.0,54.6" stroke="#2a2a2a" stroke-width="1.1" fill="none"/><path d="M49.0,-74.0 L345.0,96.9" stroke="#2a2a2a" stroke-width="1.1" fill="none"/><path d="M49.0,-31.8 L345.0,139.1" stroke="#2a2a2a" stroke-width="1.1" fill="none"/><path d="M49.0,10.5 L345.0,181.4" stroke="#2a2a2a" stroke-width="1.1" fill="none"/><path d="M49.0,52.7 L345.0,223.6" stroke="#2a2a2a" stroke-width="1.1" fill="none"/><path d="M49.0,95.0 L345.0,265.9" stroke="#2a2a2a" stroke-width="1.1" fill="none"/><path d="M49.0,137.2 L345.0,308.1" stroke="#2a2a2a" stroke-width="1.1" fill="none"/><path d="M49.0,179.5 L345.0,350.4" stroke="#2a2a2a" stroke-width="1.1" fill="none"/><path d="M49.0,221.7 L345.0,392.6" stroke="#2a2a2a" stroke-width="1.1" fill="none"/><path d="M49.0,264.0 L345.0,434.9" stroke="#2a2a2a" stroke-width="1.1" fill="none"/><path d="M49.0,306.2 L345.0,477.1" stroke="#2a2a2a" stroke-width="1.1" fill="none"/><path d="M49.0,348.5 L345.0,519.4" stroke="#2a2a2a" stroke-width="1.1" fill="none"/><path d="M49.0,390.7 L345.0,561.6" stroke="#2a2a2a" stroke-width="1.1" fill="none"/><path d="M49.0,433.0 L345.0,603.9" stroke="#2a2a2a" stroke-width="1.1" fill="none"/></g><path d="M309.0,115.0 L346.0,134.5 L346.0,149.0 L309.5,212.5 Z" fill="#111"/><path d="M196.8,19.0 L309.3,83.8 L196.8,147.8 L85.0,83.0 Z" fill="#f3f3f3"/><path d="M85.0,83.0 L197.6,147.8 L197.6,277.5 L85.0,214.0 Z" fill="#c8c8c8"/><path d="M196.8,147.8 L309.3,83.8 L309.3,212.4 L196.8,277.5 Z" fill="#818181"/><path d="M85.0,214.5 L196.8,278.0" stroke="#222" stroke-width="1" stroke-dasharray="1 2.5" fill="none"/><path d="M196.8,278.0 L309.3,213.0" stroke="#222" stroke-width="0.8" stroke-dasharray="1 1" fill="none"/></g></svg><div class="panel" style="left:641px;top:49px;width:580px;height:686px"></div><div class="hdr" style="left:642px;top:49px;width:578px"></div><div class="t" style="left:644px;top:51px;letter-spacing:-0.152px">Edit Material: Global</div><svg class="cx" style="left:1203px;top:55px" viewBox="0 0 8 8"><path d="M0.8 0.8L7.2 7.2M7.2 0.8L0.8 7.2" stroke="#fff" stroke-width="2" fill="none"/></svg><div class="grp" style="left:647px;top:78px;width:212px;height:79px"><span style="letter-spacing:-0.424px">Color</span></div><div class="t" style="left:661px;top:96px;letter-spacing:0.215px">Diffuse:</div><div class="t" style="left:656px;top:129px;letter-spacing:-0.032px">Ambient:</div><svg class="a" style="left:796px;top:97px" width="13" height="13" viewBox="0 0 13 13"><rect x="0.5" y="0.5" width="12" height="12" fill="#fff" stroke="#333"/><path d="M2.3 6.4L5 9.3L11 3.2" fill="none" stroke="#3a3a3a" stroke-width="1.1"/></svg><div class="t" style="left:811px;top:97px;letter-spacing:0.320px">Inherit</div><svg class="a" style="left:796px;top:130px" width="13" height="13" viewBox="0 0 13 13"><rect x="0.5" y="0.5" width="12" height="12" fill="#fff" stroke="#333"/><path d="M2.3 6.4L5 9.3L11 3.2" fill="none" stroke="#3a3a3a" stroke-width="1.1"/></svg><div class="t" style="left:811px;top:130px;letter-spacing:0.320px">Inherit</div><div class="t" style="right:464px;top:171px;letter-spacing:-0.076px">Highlights:</div><div class="combo" style="left:766px;top:168px;width:87px;letter-spacing:-0.131px">Non-Metallic</div><svg class="a" style="left:838px;top:178px" width="9" height="6" viewBox="0 0 9 6"><path d="M0.7 0.8L4.5 4.6L8.3 0.8" fill="none" stroke="#444" stroke-width="1"/></svg><div class="t" style="right:266px;top:77px;letter-spacing:-0.346px">Glossiness:</div><div class="trk" style="left:972px;top:80px;width:185px"></div><svg class="a" style="left:1059px;top:74px" width="11" height="19" viewBox="0 0 11 19"><path d="M0 0H11V13.5L5.5 19L0 13.5Z" fill="#0078d7"/></svg><div class="edit" style="left:1165px;top:72px;width:50px">50</div><div class="t" style="right:266px;top:111px;letter-spacing:-0.026px">Transparency:</div><div class="trk" style="left:972px;top:114px;width:185px"></div><svg class="a" style="left:972px;top:108px" width="11" height="19" viewBox="0 0 11 19"><path d="M0 0H11V13.5L5.5 19L0 13.5Z" fill="#0078d7"/></svg><div class="edit" style="left:1165px;top:106px;width:50px">0</div><div class="t" style="right:266px;top:145px;letter-spacing:0.146px">Refraction Index:</div><div class="trk" style="left:972px;top:148px;width:185px"></div><svg class="a" style="left:972px;top:142px" width="11" height="19" viewBox="0 0 11 19"><path d="M0 0H11V13.5L5.5 19L0 13.5Z" fill="#0078d7"/></svg><div class="edit" style="left:1165px;top:140px;width:50px">1.000</div><div class="t" style="right:266px;top:179px;letter-spacing:-0.072px">Self-Illumination:</div><div class="trk" style="left:972px;top:182px;width:185px"></div><svg class="a" style="left:972px;top:176px" width="11" height="19" viewBox="0 0 11 19"><path d="M0 0H11V13.5L5.5 19L0 13.5Z" fill="#0078d7"/></svg><div class="edit" style="left:1165px;top:174px;width:50px">0</div><div class="t" style="right:266px;top:213px;letter-spacing:0.146px">Reflectivity:</div><div class="trk" style="left:972px;top:216px;width:185px"></div><svg class="a" style="left:972px;top:210px" width="11" height="19" viewBox="0 0 11 19"><path d="M0 0H11V13.5L5.5 19L0 13.5Z" fill="#0078d7"/></svg><div class="edit" style="left:1165px;top:208px;width:50px">0</div><div class="grp" style="left:647px;top:248px;width:568px;height:304px"><span style="letter-spacing:-0.235px">Maps</span></div><svg class="a" style="left:667px;top:277px" width="13" height="13" viewBox="0 0 13 13"><rect x="0.5" y="0.5" width="12" height="12" fill="#fff" stroke="#333"/><path d="M2.3 6.4L5 9.3L11 3.2" fill="none" stroke="#3a3a3a" stroke-width="1.1"/></svg><div class="t" style="left:682px;top:277px;letter-spacing:-0.050px">Diffuse map</div><div class="combo" style="left:849px;top:273px;width:170px;letter-spacing:0.077px">Texture Map</div><svg class="a" style="left:1003px;top:283px" width="9" height="6" viewBox="0 0 9 6"><path d="M0.7 0.8L4.5 4.6L8.3 0.8" fill="none" stroke="#444" stroke-width="1"/></svg><div class="trk" style="left:1037px;top:280px;width:95px"></div><svg class="a" style="left:1126px;top:274px" width="11" height="19" viewBox="0 0 11 19"><path d="M0 0H11V13.5L5.5 19L0 13.5Z" fill="#0078d7"/></svg><div class="edit" style="left:1145px;top:273px;width:50px">100</div><div class="edit" style="left:662px;top:321px;width:513px;height:23px"></div><div class="a" style="left:1176px;top:322px;width:23px;height:21px;border:1px solid #adadad;background:#f6f6f6"></div><div class="a" style="left:1182px;top:335px;width:1px;height:2px;background:#1a1a4a"></div><div class="a" style="left:1186px;top:335px;width:1px;height:2px;background:#1a1a4a"></div><div class="a" style="left:1190px;top:335px;width:1px;height:2px;background:#1a1a4a"></div><svg class="a" style="left:667px;top:374px" width="13" height="13" viewBox="0 0 13 13"><rect x="0.5" y="0.5" width="12" height="12" fill="#fff" stroke="#333"/><path d="M2.3 6.4L5 9.3L11 3.2" fill="none" stroke="#3a3a3a" stroke-width="1.1"/></svg><div class="combo" style="left:684px;top:370px;width:130px;letter-spacing:-0.042px">Cutout Map</div><svg class="a" style="left:798px;top:380px" width="9" height="6" viewBox="0 0 9 6"><path d="M0.7 0.8L4.5 4.6L8.3 0.8" fill="none" stroke="#444" stroke-width="1"/></svg><div class="combo" style="left:849px;top:370px;width:170px;letter-spacing:0.077px">Texture Map</div><svg class="a" style="left:1003px;top:380px" width="9" height="6" viewBox="0 0 9 6"><path d="M0.7 0.8L4.5 4.6L8.3 0.8" fill="none" stroke="#444" stroke-width="1"/></svg><div class="trk" style="left:1037px;top:377px;width:95px"></div><svg class="a" style="left:1126px;top:371px" width="11" height="19" viewBox="0 0 11 19"><path d="M0 0H11V13.5L5.5 19L0 13.5Z" fill="#cccccc"/></svg><div class="edit" style="left:1145px;top:370px;width:50px;background:#f0f0f0;border-color:#d9d9d9;color:#6d6d6d">100</div><div class="edit" style="left:662px;top:418px;width:513px;height:23px"></div><div class="a" style="left:1176px;top:419px;width:23px;height:21px;border:1px solid #adadad;background:#f6f6f6"></div><div class="a" style="left:1182px;top:432px;width:1px;height:2px;background:#1a1a4a"></div><div class="a" style="left:1186px;top:432px;width:1px;height:2px;background:#1a1a4a"></div><div class="a" style="left:1190px;top:432px;width:1px;height:2px;background:#1a1a4a"></div><svg class="a" style="left:667px;top:471px" width="13" height="13" viewBox="0 0 13 13"><rect x="0.5" y="0.5" width="12" height="12" fill="#fff" stroke="#333"/><path d="M2.3 6.4L5 9.3L11 3.2" fill="none" stroke="#3a3a3a" stroke-width="1.1"/></svg><div class="t" style="left:682px;top:471px;letter-spacing:-0.400px">Bump map</div><div class="combo" style="left:849px;top:467px;width:170px;letter-spacing:0.077px">Texture Map</div><svg class="a" style="left:1003px;top:477px" width="9" height="6" viewBox="0 0 9 6"><path d="M0.7 0.8L4.5 4.6L8.3 0.8" fill="none" stroke="#444" stroke-width="1"/></svg><div class="trk" style="left:1037px;top:474px;width:95px"></div><svg class="a" style="left:1126px;top:468px" width="11" height="19" viewBox="0 0 11 19"><path d="M0 0H11V13.5L5.5 19L0 13.5Z" fill="#0078d7"/></svg><div class="edit" style="left:1145px;top:467px;width:50px">1000</div><div class="edit" style="left:662px;top:515px;width:513px;height:23px"></div><div class="a" style="left:1176px;top:516px;width:23px;height:21px;border:1px solid #adadad;background:#f6f6f6"></div><div class="a" style="left:1182px;top:529px;width:1px;height:2px;background:#1a1a4a"></div><div class="a" style="left:1186px;top:529px;width:1px;height:2px;background:#1a1a4a"></div><div class="a" style="left:1190px;top:529px;width:1px;height:2px;background:#1a1a4a"></div><div class="grp" style="left:647px;top:569px;width:568px;height:136px"><span style="letter-spacing:-0.108px">Map Transformation</span></div><div class="grp" style="left:657px;top:589px;width:270px;height:75px"><span style="letter-spacing:-0.508px">Scale</span></div><div class="t" style="right:471px;top:606px;letter-spacing:0.183px">Width:</div><div class="edit" style="left:758px;top:603px;width:110px">1</div><div class="t" style="right:471px;top:637px;letter-spacing:0.123px">Height:</div><div class="edit" style="left:759px;top:634px;width:110px">1</div><div class="t" style="right:428px;top:673px;letter-spacing:0.151px">Projection type:</div><div class="combo" style="left:801px;top:670px;width:68px;letter-spacing:-0.219px">Planar</div><svg class="a" style="left:854px;top:680px" width="9" height="6" viewBox="0 0 9 6"><path d="M0.7 0.8L4.5 4.6L8.3 0.8" fill="none" stroke="#444" stroke-width="1"/></svg><div class="grp" style="left:936px;top:589px;width:270px;height:106px"><span style="letter-spacing:-0.234px">Position</span></div><div class="t" style="right:186px;top:606px;letter-spacing:0.301px">Offset X:</div><div class="edit" style="left:1043px;top:603px;width:110px">0</div><div class="t" style="right:186px;top:637px;letter-spacing:0.400px">Offset Y:</div><div class="edit" style="left:1043px;top:634px;width:110px">0</div><div class="t" style="right:186px;top:668px;letter-spacing:0.271px">Rotation:</div><div class="edit" style="left:1043px;top:665px;width:110px">0</div></body></html>
